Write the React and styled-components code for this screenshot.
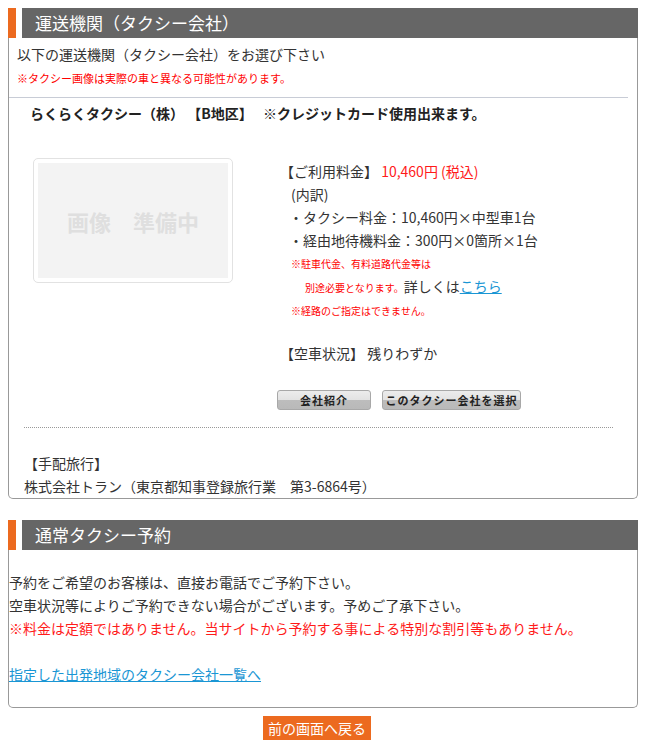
import styled, { createGlobalStyle } from "styled-components";

const GlobalStyle = createGlobalStyle`
  body {
    margin: 8px;
    font-family: "Noto Sans CJK JP", "Noto Sans", sans-serif;
    font-size: 14px;
    color: #333;
    background: #fff;
  }
`;

const App = () => {
  return (
    <>
      <GlobalStyle />
      <Section>
        <Header>
          <Accent />
          <Title>運送機関（タクシー会社）</Title>
        </Header>
        <Panel>
          <Intro>以下の運送機関（タクシー会社）をお選び下さい</Intro>
          <SmallRed $top="2px" $size="11px">
            ※タクシー画像は実際の車と異なる可能性があります。
          </SmallRed>
          <Rule />
          <Company>
            らくらくタクシー（株） 【B地区】　 ※クレジットカード使用出来ます。
          </Company>
          <Product>
            <Photo>
              <PhotoInner>画像　準備中</PhotoInner>
            </Photo>
            <Details>
              <Line>
                【ご利用料金】 <Red>10,460円 (税込)</Red>
              </Line>
              <Line $indent="11px">(内訳)</Line>
              <Line $indent="9px">・タクシー料金：10,460円×中型車1台</Line>
              <Line $indent="9px">・経由地待機料金：300円×0箇所×1台</Line>
              <SmallRed $indent="11px">※駐車代金、有料道路代金等は</SmallRed>
              <SmallRed $indent="25px">
                別途必要となります。<Plain>詳しくは</Plain>
                <TextLink href="#">こちら</TextLink>
              </SmallRed>
              <SmallRed $indent="11px">※経路のご指定はできません。</SmallRed>
              <Line $top="20px">【空車状況】 残りわずか</Line>
              <Buttons>
                <GrayButton $w="94px">会社紹介</GrayButton>
                <GrayButton $w="139px">このタクシー会社を選択</GrayButton>
              </Buttons>
            </Details>
          </Product>
          <DottedRule />
          <Agency>
            <Line>【手配旅行】</Line>
            <Line>株式会社トラン（東京都知事登録旅行業　第3-6864号）</Line>
          </Agency>
        </Panel>
      </Section>

      <Section $top="21px">
        <Header>
          <Accent />
          <Title>通常タクシー予約</Title>
        </Header>
        <Panel $plain>
          <Line>予約をご希望のお客様は、直接お電話でご予約下さい。</Line>
          <Line>空車状況等によりご予約できない場合がございます。予めご了承下さい。</Line>
          <Line>
            <Red>※料金は定額ではありません。当サイトから予約する事による特別な割引等もありません。</Red>
          </Line>
          <Line>&nbsp;</Line>
          <Line>
            <TextLink href="#">指定した出発地域のタクシー会社一覧へ</TextLink>
          </Line>
        </Panel>
      </Section>

      <Footer>
        <BackButton>前の画面へ戻る</BackButton>
      </Footer>
    </>
  );
};

const Section = styled.section`
  margin-top: ${(p) => p.$top || "0"};
`;

const Header = styled.div`
  display: flex;
  height: 30px;
`;

const Accent = styled.div`
  width: 8px;
  margin-right: 6px;
  background: #ec6a1f;
`;

const Title = styled.h2`
  flex: 1;
  margin: 0;
  padding-left: 13px;
  background: #666;
  color: #fff;
  font-size: 17px;
  font-weight: normal;
  line-height: 30px;
`;

const Panel = styled.div`
  border: 1px solid #999;
  border-top: none;
  border-radius: 0 0 5px 5px;
  padding: ${(p) => (p.$plain ? "21px 0 21px 0" : "5px 0 0 8px")};
`;

const Intro = styled.p`
  margin: 0;
  line-height: 22px;
`;

const Line = styled.div`
  line-height: 23px;
  white-space: nowrap;
  padding-left: ${(p) => p.$indent || "0"};
  margin-top: ${(p) => p.$top || "0"};
`;

const SmallRed = styled.div`
  color: #ff0000;
  font-size: ${(p) => p.$size || "10px"};
  line-height: 23px;
  white-space: nowrap;
  padding-left: ${(p) => p.$indent || "0"};
  margin-top: ${(p) => p.$top || "0"};
`;

const Red = styled.span`
  color: #ff1a1a;
`;

const Plain = styled.span`
  color: #333;
  font-size: 14px;
`;

const TextLink = styled.a`
  color: #1a96d4;
  font-size: 14px;
  text-decoration: underline;
`;

const Rule = styled.hr`
  margin: 7px 9px 0 -8px;
  border: none;
  border-top: 1px solid #c8ccd6;
`;

const Company = styled.div`
  margin-top: 4px;
  padding-left: 13px;
  font-weight: bold;
  line-height: 22px;
  color: #222;
  white-space: pre;
`;

const Product = styled.div`
  display: flex;
  margin-top: 34px;
  padding-left: 16px;
`;

const Photo = styled.div`
  box-sizing: border-box;
  width: 200px;
  height: 125px;
  padding: 4px;
  border: 1px solid #e2e2e2;
  border-radius: 5px;
`;

const PhotoInner = styled.div`
  height: 100%;
  display: flex;
  align-items: center;
  justify-content: center;
  background: #f3f3f3;
  color: #dfdfdf;
  font-size: 22px;
  font-weight: bold;
`;

const Details = styled.div`
  margin-left: 47px;
  padding-top: 2px;
`;

const Buttons = styled.div`
  display: flex;
  gap: 11px;
  margin: 25px 0 0 -3px;
`;

const GrayButton = styled.button`
  box-sizing: border-box;
  width: ${(p) => p.$w};
  height: 20px;
  padding: 0;
  border: 1px solid #a8a8a8;
  border-radius: 3px;
  background: linear-gradient(#ececec 0%, #e2e2e2 50%, #bdbdbd 51%, #b9b9b9 100%);
  color: #222;
  font-family: inherit;
  font-size: 11px;
  font-weight: bold;
  letter-spacing: 1px;
  line-height: 18px;
`;

const DottedRule = styled.div`
  margin: 17px 24px 0 7px;
  border-top: 1px dotted #999;
`;

const Agency = styled.div`
  margin-top: 24px;
  padding-left: 7px;
`;

const Footer = styled.div`
  display: flex;
  justify-content: center;
  margin-top: 8px;
  padding-right: 12px;
`;

const BackButton = styled.button`
  width: 108px;
  height: 24px;
  padding: 0;
  border: none;
  background: #ec6a1f;
  color: #fff;
  font-family: inherit;
  font-size: 14px;
  line-height: 24px;
`;

export default App;
